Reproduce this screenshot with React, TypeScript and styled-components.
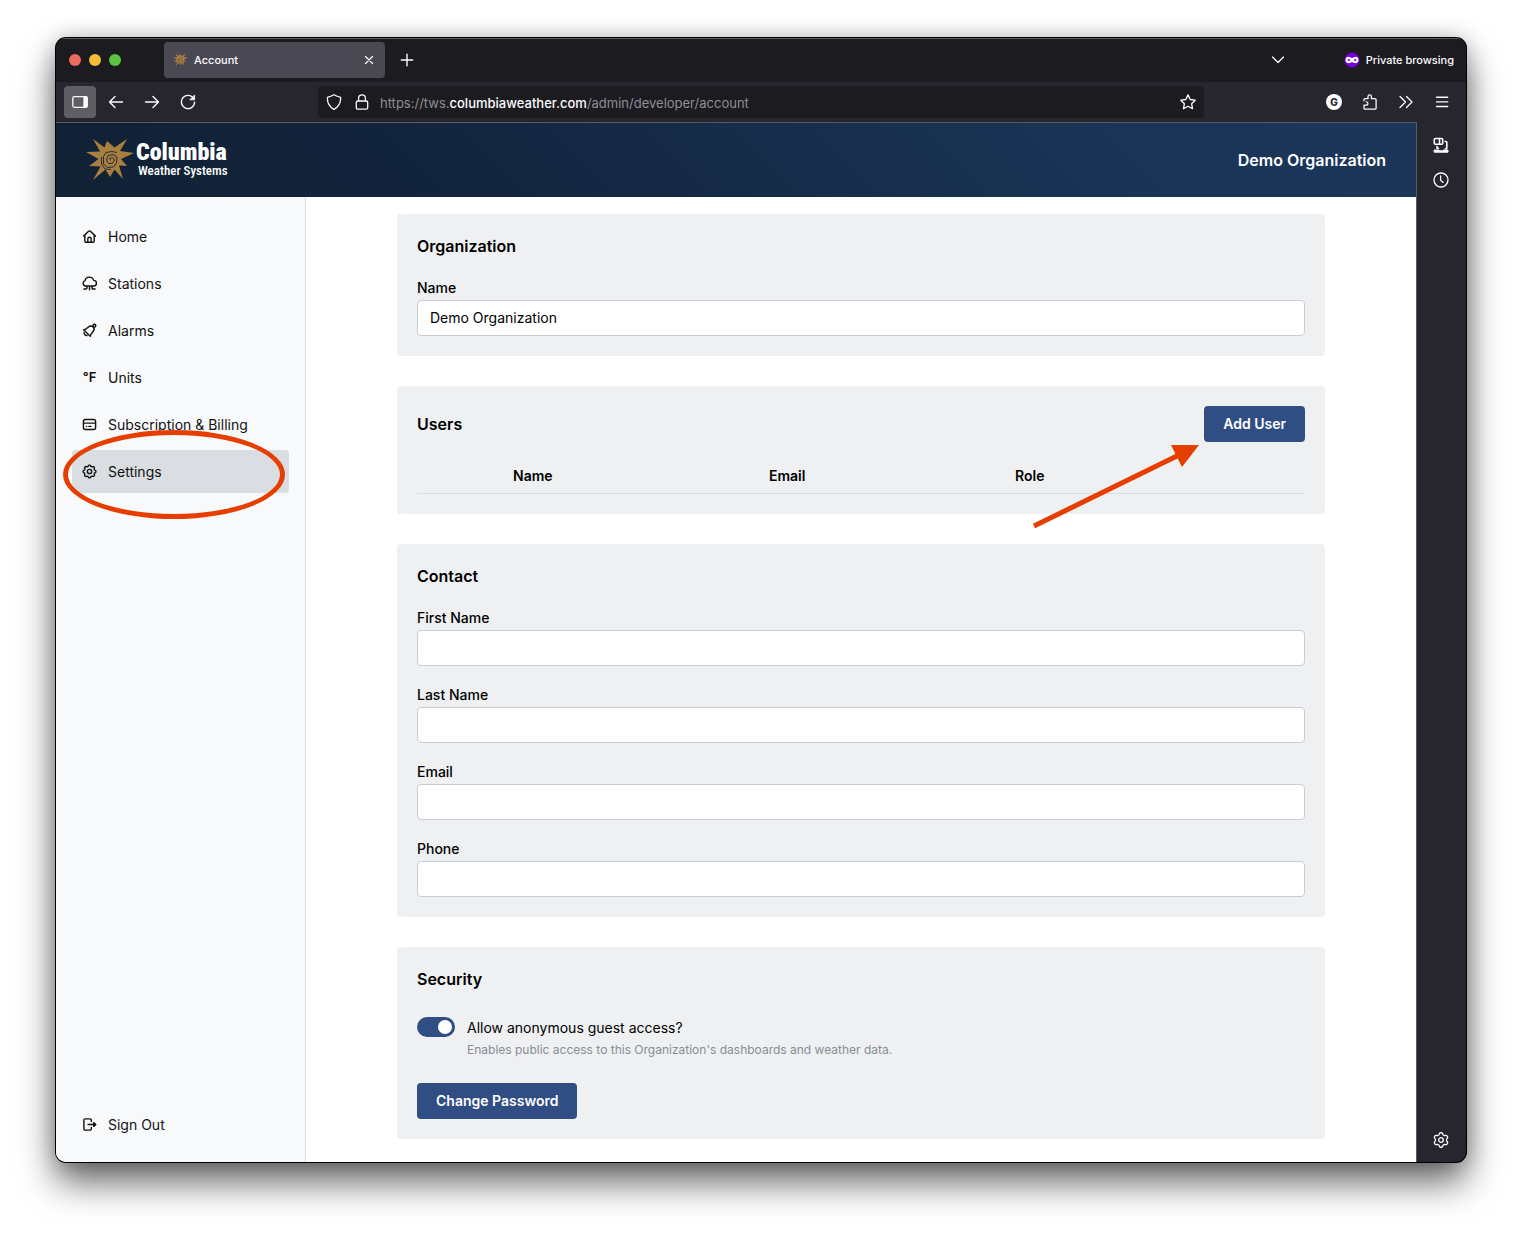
import React, { useState } from "react";
import styled, { createGlobalStyle } from "styled-components";

const Global = createGlobalStyle`
  *, *::before, *::after { box-sizing: border-box; }
  body { margin: 0; background: #fff; color: #000; font-family: Inter, "Noto Sans", sans-serif; font-size: 14px; line-height: 22px; }
  button, input { font: inherit; color: inherit; }
`;

/* ---------- Browser window ---------- */

const Desktop = styled.div`
  min-height: 100vh;
  padding: 38px 56px 74px;
  display: flex;
  overflow: hidden;
`;

const Window = styled.div`
  flex: 1;
  min-width: 0;
  display: flex;
  flex-direction: column;
  overflow: hidden;
  border-radius: 10px;
  background: #27252d;
  box-shadow: 0 0 0 1px #000, 0 20px 36px rgba(0, 0, 0, 0.6), 0 0 22px rgba(0, 0, 0, 0.22);
`;

const TabBar = styled.header`
  height: 44px;
  display: flex;
  align-items: center;
  padding: 0 12px 0 13px;
  background: #1c1b20;
  box-shadow: inset 0 1px #5a595e;
  color: #fbfbfe;
`;

const Lights = styled.div`
  display: flex;
  gap: 8px;
  margin-right: 43px;
`;

const Light = styled.button<{ $color: string }>`
  width: 12px;
  height: 12px;
  padding: 0;
  border: 0;
  border-radius: 50%;
  background: ${(p) => p.$color};
`;

const Tab = styled.div`
  width: 221px;
  height: 36px;
  margin-right: 6px;
  padding: 0 6px 0 9px;
  display: flex;
  align-items: center;
  gap: 6px;
  border-radius: 4px;
  background: #4a4852;
  font-size: 11px;
  font-weight: 500;
`;

const TabTitle = styled.span`
  flex: 1;
`;

const ChromeButton = styled.button<{ $small?: boolean; $active?: boolean }>`
  flex: none;
  width: ${(p) => (p.$small ? 20 : 32)}px;
  height: ${(p) => (p.$small ? 20 : 32)}px;
  padding: 0;
  display: grid;
  place-items: center;
  border: 0;
  border-radius: 4px;
  background: ${(p) => (p.$active ? "#5f5e65" : "transparent")};
  color: #fbfbfe;
`;

const Spring = styled.div`
  flex: 1;
`;

const PrivateBadge = styled.div`
  margin-left: 50px;
  display: flex;
  align-items: center;
  gap: 6px;
  font-size: 11px;
  font-weight: 500;
`;

const Toolbar = styled.div`
  height: 40px;
  padding: 0 8px;
  display: flex;
  align-items: center;
  gap: 114px;
`;

const ToolGroup = styled.div`
  display: flex;
  gap: 4px;
`;

const UrlBar = styled.div`
  flex: 1;
  min-width: 0;
  height: 32px;
  padding: 0 8px;
  display: flex;
  align-items: center;
  gap: 12px;
  border-radius: 4px;
  background: #1c1b20;
  color: #fbfbfe;
`;

const Address = styled.div`
  flex: 1;
  margin-left: -2px;
  overflow: hidden;
  white-space: nowrap;
  font-size: 13px;
  line-height: 20px;
  padding-top: 2px;
  color: #8f8e94;
  b { font-weight: 500; color: #fbfbfe; }
`;

const Body = styled.div`
  flex: 1;
  min-height: 0;
  display: flex;
`;

const Page = styled.div`
  flex: 1;
  min-width: 0;
  display: flex;
  flex-direction: column;
  background: #fff;
  border-top: 1px solid #5b5a60;
  border-right: 1px solid #5b5a60;
`;

const BrowserSide = styled.aside`
  width: 49px;
  padding: 7px 8px 6px;
  display: flex;
  flex-direction: column;
  gap: 3px;
`;

/* ---------- Site ---------- */

const SiteHeader = styled.header`
  height: 74px;
  padding: 0 30px;
  display: flex;
  align-items: center;
  justify-content: space-between;
  background: linear-gradient(45deg, #112235 0%, #12233c 25%, #1a3558 80%, #1b3659 100%);
  color: #fff;
`;

const Brand = styled.a`
  display: flex;
  align-items: center;
  gap: 2px;
  color: #fff;
  text-decoration: none;
  font-family: "Roboto Condensed", Roboto, sans-serif;
`;

const BrandText = styled.span`
  display: flex;
  flex-direction: column;
`;

const BrandName = styled.span`
  font-size: 24px;
  font-weight: 900;
  line-height: 22px;
`;

const BrandSub = styled.span`
  padding-left: 2px;
  font-size: 13px;
  font-weight: 500;
  line-height: 16px;
`;

const OrgName = styled.span`
  font-size: 16px;
  font-weight: 600;
`;

const Columns = styled.div`
  flex: 1;
  display: flex;
`;

const Sidebar = styled.nav`
  width: 250px;
  padding: 18px 16px 16px;
  display: flex;
  flex-direction: column;
  gap: 4px;
  background: #f8f9fb;
  border-right: 1px solid #dadcdf;
`;

const NavItem = styled.a<{ $active?: boolean; $last?: boolean }>`
  position: relative;
  height: 43px;
  padding: 0 10px;
  margin-top: ${(p) => (p.$last ? "auto" : 0)};
  display: flex;
  align-items: center;
  gap: 11px;
  border-radius: 4px;
  background: ${(p) => (p.$active ? "#dadde1" : "transparent")};
  color: #111;
  text-decoration: none;
`;

const NavIcon = styled.span`
  width: 15px;
  height: 15px;
  display: grid;
  place-items: center;
  font-size: 13px;
  font-weight: 600;
  line-height: 15px;
  white-space: nowrap;
  svg { width: 15px; height: 15px; }
`;

const Main = styled.main`
  flex: 1;
  min-width: 0;
  padding: 17px 20px 22px;
`;

const Cards = styled.div`
  max-width: 928px;
  margin: 0 auto;
  display: flex;
  flex-direction: column;
  gap: 30px;
`;

const Card = styled.section<{ $gap?: number }>`
  position: relative;
  padding: 20px;
  display: flex;
  flex-direction: column;
  gap: ${(p) => p.$gap ?? 18}px;
  border-radius: 4px;
  background: #eff0f2;
`;

const CardHead = styled.div`
  display: flex;
  align-items: center;
  justify-content: space-between;
`;

const CardTitle = styled.h2`
  margin: 0;
  font-size: 16px;
  font-weight: 600;
  line-height: 25px;
`;

const FieldBox = styled.div`
  display: flex;
  flex-direction: column;
  gap: 1px;
`;

const Label = styled.label`
  font-weight: 500;
`;

const Input = styled.input`
  width: 100%;
  height: 36px;
  padding: 0 12px 1px;
  border: 1px solid #c9ced4;
  border-radius: 4px;
  background: #fff;
`;

const Button = styled.button`
  align-self: flex-start;
  height: 36px;
  padding: 0 19px;
  border: 0;
  border-radius: 4px;
  background: #304e84;
  color: #fff;
  font-weight: 600;
`;

const Table = styled.table`
  width: 100%;
  table-layout: fixed;
  border-collapse: separate;
  border-spacing: 0;
  th {
    height: 36px;
    padding: 0 10px;
    border-bottom: 1px solid #d9dce0;
    text-align: left;
    font-weight: 600;
  }
`;

const SwitchRow = styled.div`
  padding-top: 7px;
  margin-bottom: 4px;
  display: flex;
  gap: 12px;
`;

const Switch = styled.input`
  appearance: none;
  flex: none;
  width: 38px;
  height: 20px;
  margin: 0;
  padding: 3px;
  display: flex;
  border-radius: 10px;
  background: #adb5bd;
  &::before {
    content: "";
    width: 14px;
    height: 14px;
    border-radius: 50%;
    background: #fff;
  }
  &:checked { background: #304e84; justify-content: flex-end; }
`;

const SwitchText = styled.div`
  display: flex;
  flex-direction: column;
`;

const Hint = styled.span`
  font-size: 12px;
  color: #868e96;
`;

/* ---------- Annotations ---------- */

const Ellipse = styled.span`
  position: absolute;
  left: -9px;
  top: -20px;
  width: 222px;
  height: 89px;
  border: 5px solid #e63e00;
  border-radius: 50%;
  pointer-events: none;
`;

const Arrow = styled.svg`
  position: absolute;
  right: 124px;
  top: 56px;
  overflow: visible;
  pointer-events: none;
`;

/* ---------- Icons ---------- */

type IconProps = { size?: number; sw?: number; box?: number; children: React.ReactNode };

const Icon = ({ size = 16, sw = 1.3, box = 16, children }: IconProps) => (
  <svg width={size} height={size} viewBox={`0 0 ${box} ${box}`} fill="none" stroke="currentColor"
    strokeWidth={sw} strokeLinecap="round" strokeLinejoin="round" aria-hidden="true">
    {children}
  </svg>
);

const Sun = ({ width, spiral }: { width: number; spiral: string }) => (
  <svg width={width} height={(width * 44) / 48} viewBox="0 0 48 44" aria-hidden="true">
    <path fill="#a97f3f" d="M7 1 18.500 9.500 21 3 28.500 9.500 41 1 34 13 48 15 35 21 41 28 33 27.500 37 41 28.500 31.500 24 39 19.500 31.500 7 42 14.500 28.500 3 28 12.500 21 0 14 14 13.500Z" />
    <path fill="none" stroke={spiral} strokeWidth=".9" strokeLinejoin="round"
      d="M24.500 22.500 23.500 20.500 26.500 19.500 28.500 22 26.500 25.500 22.500 25.500 20.500 22 22 17.500 27 16.500 31 19 30.500 25 27.500 29 21.500 29.500 17.500 26 17.500 18.500 20 14.500 26 13.500 31 14.500M15.500 19 15.500 26 19 31 25 31.500" />
  </svg>
);

/* Closed outline with n evenly spaced lobes, used by the gear icons. */
const lobed = (c: number, r: number, amp: number, n: number) => {
  let d = "";
  for (let i = 0; i < 96; i++) {
    const a = (i / 96) * Math.PI * 2 - Math.PI / 2;
    const k = r + amp * Math.tanh(2 * Math.cos(n * (a + Math.PI / 2)));
    d += `${i ? "L" : "M"}${(c + k * Math.cos(a)).toFixed(2)} ${(c + k * Math.sin(a)).toFixed(2)}`;
  }
  return d + "Z";
};

const icons = {
  home: <Icon sw={1.5}><path d="M1.700 7.600 7 2.400a1.400 1.400 0 0 1 2 0l5.300 5.200M3 6.700v6.300a1.200 1.200 0 0 0 1.200 1.200h7.600a1.200 1.200 0 0 0 1.200-1.200V6.700M6.200 14v-3.400a1.800 1.800 0 0 1 3.600 0V14" /></Icon>,
  stations: <Icon sw={1.5}><path d="M4.300 10.700H4A3 3 0 0 1 3.200 4.900 4.800 4.800 0 0 1 12.500 4.700 3 3 0 0 1 12.400 10.700H4.300M5.300 10.900v1.900a1.100 1.100 0 0 1-1.100 1.100H2M8 10.900v3.700M10.700 10.900v1.900a1.100 1.100 0 0 0 1.100 1.100h2.200" /></Icon>,
  alarms: <Icon sw={1.5}><path d="M1.600 7.300C4 6.900 5.300 5.600 6.900 4.200c1.700-1.400 3.500-1.300 4.900 0s1.400 3.300 0 4.900c-1.300 1.500-2.600 2.900-3 5.100ZM2.200 10.300c-.2 1.600 1.300 3.200 3.200 3" /><circle cx="13.200" cy="2.800" r="1.500" /></Icon>,
  billing: <Icon sw={1.5}><rect x="1.500" y="2.700" width="13" height="10.600" rx="2" /><path d="M2 6.500h12.300M4.800 10h.1M7.300 10h2.200" /></Icon>,
  settings: <Icon sw={1.5}><path d={lobed(8, 6.2, 0.6, 8)} /><circle cx="8" cy="8" r="2.300" /></Icon>,
  signout: <Icon sw={1.5}><path d="M10 4.800V3.500A1.500 1.500 0 0 0 8.500 2h-5A1.500 1.500 0 0 0 2 3.500v9A1.500 1.500 0 0 0 3.500 14h5a1.500 1.500 0 0 0 1.500-1.500v-1.300M6.500 8h8" /><path fill="currentColor" d="M12.500 6 14.600 8l-2.100 2Z" /></Icon>,
  panel: <Icon><rect x=".8" y="2.700" width="14.400" height="10.600" rx="1.500" /><path fill="currentColor" d="M12 3h2a1 1 0 0 1 1 1v8a1 1 0 0 1-1 1h-2Z" /></Icon>,
  back: <Icon sw={1.4}><path d="M14.500 8H1.500M7 2.500 1.500 8 7 13.500" /></Icon>,
  forward: <Icon sw={1.4}><path d="M1.500 8h13M9 2.500 14.500 8 9 13.500" /></Icon>,
  reload: <Icon sw={1.4}><path d="M13.800 4.800A6.600 6.600 0 1 0 14.600 8.300" /><path fill="currentColor" strokeWidth=".8" d="M14.600 1.300v4.500h-4.500Z" /></Icon>,
  shield: <Icon><path d="M8 .8c2 1.200 4 2 6.600 2.500C14.900 8.500 12.500 13 8 15.400 3.500 13 1.100 8.500 1.400 3.300 4 2.800 6 2 8 .8Z" /></Icon>,
  lock: <Icon><rect x="2.300" y="7" width="11.400" height="8.200" rx="1.500" /><path d="M4.600 7V4.200a3.400 3.400 0 0 1 6.800 0V7" /></Icon>,
  star: <Icon><path d="m8 .9 2.200 4.600 5 .7-3.600 3.500.9 5L8 12.300l-4.500 2.400.9-5L.8 6.200l5-.7Z" /></Icon>,
  close: <Icon size={10} box={10} sw={1.3}><path d="m1.500 1.500 7 7M8.500 1.500l-7 7" /></Icon>,
  plus: <Icon sw={1.4}><path d="M8 2.300v11.400M2.300 8h11.400" /></Icon>,
  chevron: <Icon sw={1.3}><path d="m2.500 5 5.500 5.500L13.500 5" /></Icon>,
  more: <Icon sw={1.3}><path d="m2 2.500 5.500 5.500L2 13.500M8.500 2.500 14 8l-5.500 5.500" /></Icon>,
  menu: <Icon sw={1.4}><path d="M2.500 3.300h11.200M2.500 7.900h11.200M2.500 12.500h11.200" /></Icon>,
  puzzle: <Icon><path d="M2 6.800V5.700a1 1 0 0 1 1-1h3V2.500a1.700 1.700 0 0 1 3.400 0v2.200h3.400a1.300 1.300 0 0 1 1.300 1.300v7.900a1.300 1.300 0 0 1-1.300 1.300H3a1 1 0 0 1-1-1v-3h2.200a1.700 1.700 0 0 0 0-3.400" /></Icon>,
  devices: <Icon sw={1.6}><rect x="1.300" y="1.500" width="8.400" height="5.800" rx="1" /><path d="M6.500 1.500v5.500M12.200 4.500h.8a.8.800 0 0 1 .8.800v5.500M4 9.500v1.800h1.500" /><path fill="currentColor" strokeWidth="1" d="M1.500 13h4.500l.8.800h2.900l.8-.8h4.500v2.200H1.500Z" /><path d="M12.500 11.600h1.300" /></Icon>,
  clock: <Icon><circle cx="8" cy="8" r="7" /><path d="M7.600 4v4.200l2.600 2.200" /></Icon>,
  gear: <Icon><path d={lobed(8, 6.4, 0.9, 6)} /><circle cx="8" cy="8" r="2.300" /></Icon>,
  mask: (
    <svg width="16" height="16" viewBox="0 0 16 16" aria-hidden="true">
      <circle cx="8" cy="8" r="7.600" fill="#7200d4" />
      <path fill="none" stroke="#fff" strokeWidth="2.100" d="M8 8C6.700 6.300 5.800 5.900 4.700 5.900a2.100 2.100 0 0 0 0 4.200C5.800 10.100 6.700 9.700 8 8s2.200-2.100 3.300-2.100a2.100 2.100 0 0 1 0 4.200C10.200 10.100 9.300 9.700 8 8Z" />
    </svg>
  ),
};

const GBadge = styled.span`
  width: 16px;
  height: 16px;
  border-radius: 50%;
  background: #fff;
  color: #27252d;
  font-size: 10px;
  font-weight: 800;
  line-height: 16px;
  text-align: center;
`;

/* ---------- Parts ---------- */

const nav = [
  { name: "Home", icon: icons.home },
  { name: "Stations", icon: icons.stations },
  { name: "Alarms", icon: icons.alarms },
  { name: "Units", icon: "°F" },
  { name: "Subscription & Billing", icon: icons.billing },
  { name: "Settings", icon: icons.settings, active: true },
  { name: "Sign Out", icon: icons.signout, last: true },
];

const Field = ({ id, label, value = "" }: { id: string; label: string; value?: string }) => (
  <FieldBox>
    <Label htmlFor={id}>{label}</Label>
    <Input id={id} defaultValue={value} />
  </FieldBox>
);

export default function App() {
  const [guest, setGuest] = useState(true);
  return (
    <>
      <Global />
      <Desktop>
        <Window>
          <TabBar>
            <Lights>
              <Light $color="#ed6a5e" aria-label="Close window" />
              <Light $color="#f4bd35" aria-label="Minimize window" />
              <Light $color="#5bc344" aria-label="Zoom window" />
            </Lights>
            <Tab>
              <Sun width={15} spiral="#4a4852" />
              <TabTitle>Account</TabTitle>
              <ChromeButton $small aria-label="Close tab">{icons.close}</ChromeButton>
            </Tab>
            <ChromeButton aria-label="New tab">{icons.plus}</ChromeButton>
            <Spring />
            <ChromeButton aria-label="List all tabs">{icons.chevron}</ChromeButton>
            <PrivateBadge>{icons.mask}Private browsing</PrivateBadge>
          </TabBar>
          <Toolbar>
            <ToolGroup>
              <ChromeButton $active aria-label="Sidebars">{icons.panel}</ChromeButton>
              <ChromeButton aria-label="Back">{icons.back}</ChromeButton>
              <ChromeButton aria-label="Forward">{icons.forward}</ChromeButton>
              <ChromeButton aria-label="Reload">{icons.reload}</ChromeButton>
            </ToolGroup>
            <UrlBar>
              {icons.shield}
              {icons.lock}
              <Address role="textbox" aria-label="Address" tabIndex={0}>
                https://tws.<b>columbiaweather.com</b>/admin/developer/account
              </Address>
              {icons.star}
            </UrlBar>
            <ToolGroup>
              <ChromeButton aria-label="Account extension"><GBadge>G</GBadge></ChromeButton>
              <ChromeButton aria-label="Extensions">{icons.puzzle}</ChromeButton>
              <ChromeButton aria-label="More tools">{icons.more}</ChromeButton>
              <ChromeButton aria-label="Menu">{icons.menu}</ChromeButton>
            </ToolGroup>
          </Toolbar>
          <Body>
            <Page>
              <SiteHeader>
                <Brand href="#home">
                  <Sun width={48} spiral="#13243b" />
                  <BrandText>
                    <BrandName>Columbia</BrandName>
                    <BrandSub>Weather Systems</BrandSub>
                  </BrandText>
                </Brand>
                <OrgName>Demo Organization</OrgName>
              </SiteHeader>
              <Columns>
                <Sidebar>
                  {nav.map((n) => (
                    <NavItem key={n.name} href="#" $active={n.active} $last={n.last}>
                      <NavIcon>{n.icon}</NavIcon>
                      {n.name}
                      {n.active && <Ellipse />}
                    </NavItem>
                  ))}
                </Sidebar>
                <Main>
                  <Cards>
                    <Card>
                      <CardTitle>Organization</CardTitle>
                      <Field id="org-name" label="Name" value="Demo Organization" />
                    </Card>
                    <Card $gap={16}>
                      <CardHead>
                        <CardTitle>Users</CardTitle>
                        <Button>Add User</Button>
                      </CardHead>
                      <Table>
                        <colgroup>
                          <col style={{ width: 86 }} />
                          <col style={{ width: 256 }} />
                          <col style={{ width: 246 }} />
                          <col />
                        </colgroup>
                        <thead>
                          <tr><th /><th>Name</th><th>Email</th><th>Role</th></tr>
                        </thead>
                      </Table>
                      <Arrow width="168" height="85" viewBox="0 0 168 85" aria-hidden="true">
                        <path d="M1 84 148 12" stroke="#e63e00" strokeWidth="5" />
                        <path d="M138 3h28l-17 22Z" fill="#e63e00" />
                      </Arrow>
                    </Card>
                    <Card>
                      <CardTitle>Contact</CardTitle>
                      <Field id="first" label="First Name" />
                      <Field id="last" label="Last Name" />
                      <Field id="email" label="Email" />
                      <Field id="phone" label="Phone" />
                    </Card>
                    <Card>
                      <CardTitle>Security</CardTitle>
                      <SwitchRow>
                        <Switch id="guest" type="checkbox" role="switch" checked={guest}
                          onChange={(e) => setGuest(e.target.checked)} aria-describedby="guest-hint" />
                        <SwitchText>
                          <label htmlFor="guest">Allow anonymous guest access?</label>
                          <Hint id="guest-hint">Enables public access to this Organization's dashboards and weather data.</Hint>
                        </SwitchText>
                      </SwitchRow>
                      <Button>Change Password</Button>
                    </Card>
                  </Cards>
                </Main>
              </Columns>
            </Page>
            <BrowserSide>
              <ChromeButton aria-label="Synced devices">{icons.devices}</ChromeButton>
              <ChromeButton aria-label="History">{icons.clock}</ChromeButton>
              <Spring />
              <ChromeButton aria-label="Customize sidebar">{icons.gear}</ChromeButton>
            </BrowserSide>
          </Body>
        </Window>
      </Desktop>
    </>
  );
}
